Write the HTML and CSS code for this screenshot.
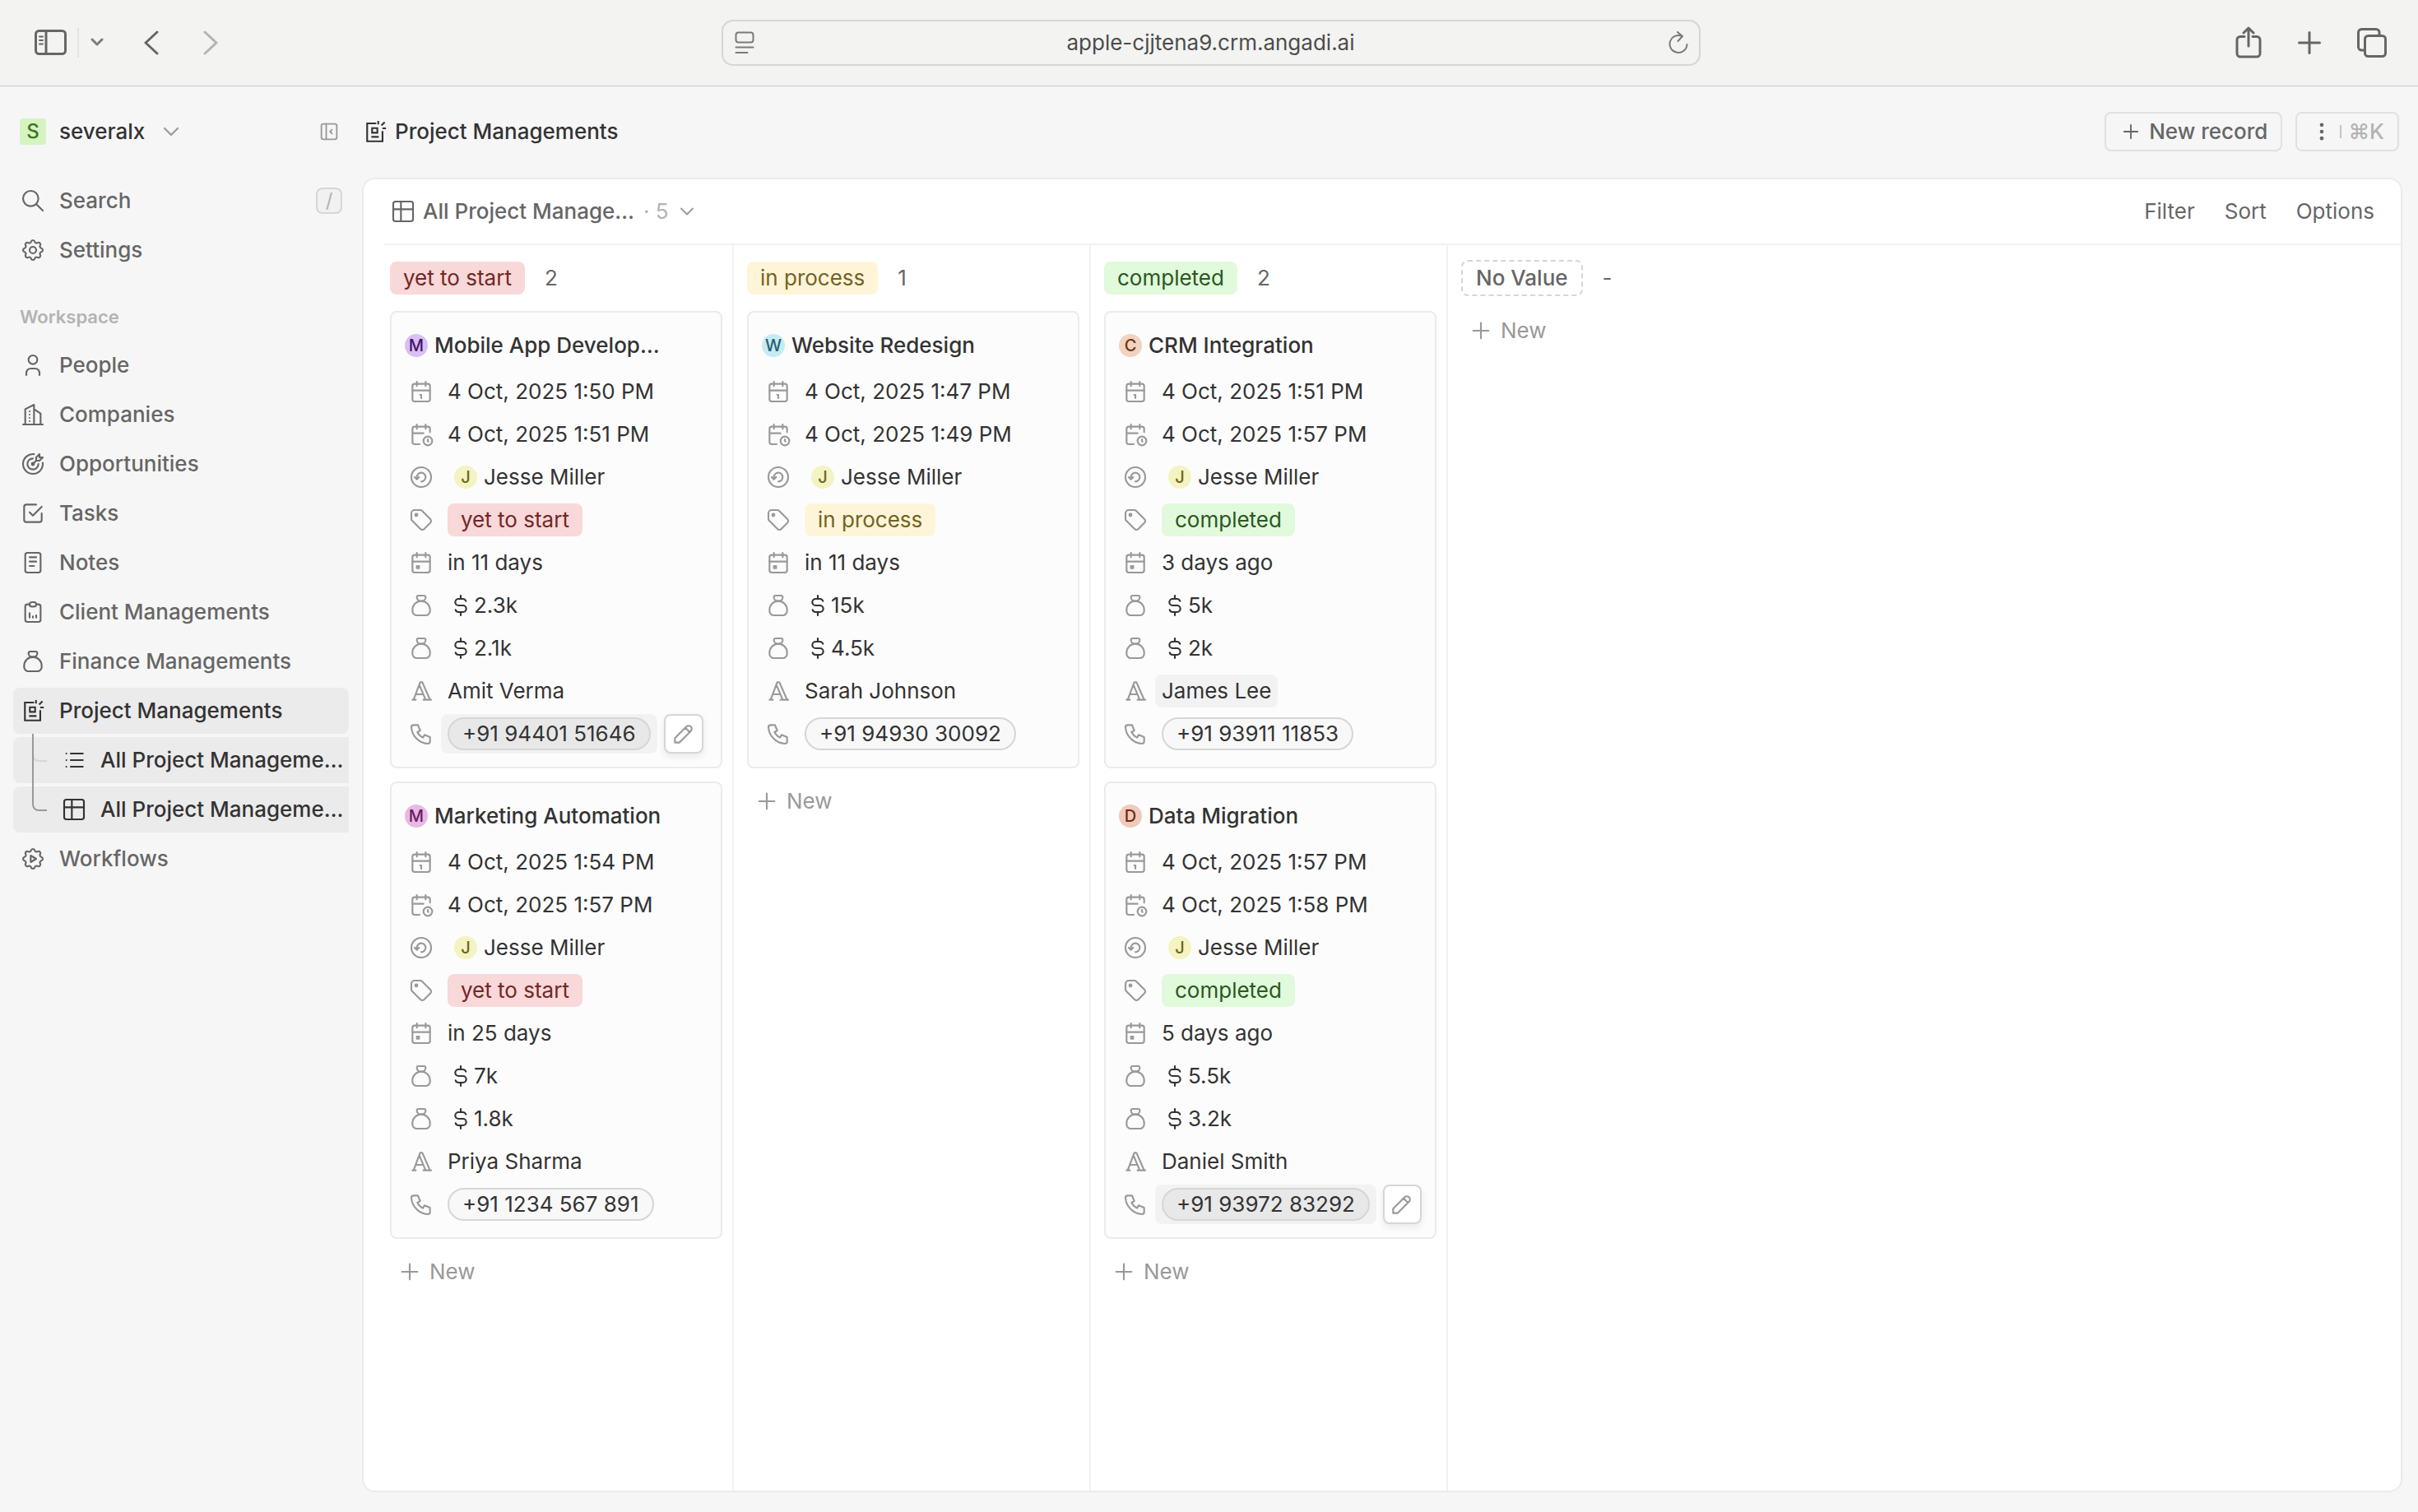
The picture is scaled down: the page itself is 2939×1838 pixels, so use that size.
FILE: index.html
```html
<!DOCTYPE html>
<html lang="en">
<head>
<meta charset="utf-8">
<meta name="viewport" content="width=device-width, initial-scale=1">
<title>Project Managements</title>
<link rel="stylesheet" href="styles.css">
</head>
<body>
<svg class="sprite" aria-hidden="true">
  <symbol id="i-search" viewBox="0 0 24 24"><circle cx="10" cy="10" r="7"/><path d="M21 21l-6-6"/></symbol>
  <symbol id="i-settings" viewBox="0 0 24 24"><path d="M10.325 4.317c.426-1.756 2.924-1.756 3.35 0a1.724 1.724 0 0 0 2.573 1.066c1.543-.94 3.31.826 2.37 2.37a1.724 1.724 0 0 0 1.065 2.572c1.756.426 1.756 2.924 0 3.35a1.724 1.724 0 0 0-1.066 2.573c.94 1.543-.826 3.31-2.37 2.37a1.724 1.724 0 0 0-2.572 1.065c-.426 1.756-2.924 1.756-3.35 0a1.724 1.724 0 0 0-2.573-1.066c-1.543.94-3.31-.826-2.37-2.37a1.724 1.724 0 0 0-1.065-2.572c-1.756-.426-1.756-2.924 0-3.35a1.724 1.724 0 0 0 1.066-2.573c-.94-1.543.826-3.31 2.37-2.37 1 .608 2.296.07 2.572-1.065z"/><circle cx="12" cy="12" r="3"/></symbol>
  <symbol id="i-workflow" viewBox="0 0 24 24"><path d="M10.325 4.317c.426-1.756 2.924-1.756 3.35 0a1.724 1.724 0 0 0 2.573 1.066c1.543-.94 3.31.826 2.37 2.37a1.724 1.724 0 0 0 1.065 2.572c1.756.426 1.756 2.924 0 3.35a1.724 1.724 0 0 0-1.066 2.573c.94 1.543-.826 3.31-2.37 2.37a1.724 1.724 0 0 0-2.572 1.065c-.426 1.756-2.924 1.756-3.35 0a1.724 1.724 0 0 0-2.573-1.066c-1.543.94-3.31-.826-2.37-2.37a1.724 1.724 0 0 0-1.065-2.572c-1.756-.426-1.756-2.924 0-3.35a1.724 1.724 0 0 0 1.066-2.573c-.94-1.543.826-3.31 2.37-2.37 1 .608 2.296.07 2.572-1.065z"/><path d="M10 9v6l5-3z"/></symbol>
  <symbol id="i-user" viewBox="0 0 24 24"><circle cx="12" cy="7" r="4"/><path d="M6 21v-2a4 4 0 0 1 4-4h4a4 4 0 0 1 4 4v2"/></symbol>
  <symbol id="i-building" viewBox="0 0 24 24"><path d="M3 21h18M5 21V7l8-4v18M19 21V11l-6-4M9 9v.01M9 12v.01M9 15v.01M9 18v.01"/></symbol>
  <symbol id="i-target" viewBox="0 0 24 24"><circle cx="12" cy="12" r="1"/><path d="M12 7a5 5 0 1 0 5 5M13 3.055A9 9 0 1 0 20.941 11M15 6v3h3l3-3h-3V3zM15 9l-3 3"/></symbol>
  <symbol id="i-checkbox" viewBox="0 0 24 24"><path d="M9 11l3 3 8-8M20 12v6a2 2 0 0 1-2 2H6a2 2 0 0 1-2-2V6a2 2 0 0 1 2-2h9"/></symbol>
  <symbol id="i-notes" viewBox="0 0 24 24"><rect x="5" y="3" width="14" height="18" rx="2"/><path d="M9 7h6M9 11h6M9 15h4"/></symbol>
  <symbol id="i-clipboard" viewBox="0 0 24 24"><path d="M9 5H7a2 2 0 0 0-2 2v12a2 2 0 0 0 2 2h10a2 2 0 0 0 2-2V7a2 2 0 0 0-2-2h-2"/><rect x="9" y="3" width="6" height="4" rx="2"/><path d="M9 17v-4M12 17v-1M15 17v-2"/></symbol>
  <symbol id="i-money" viewBox="0 0 24 24"><path d="M9.5 3h5A1.500 1.500 0 0 1 16 4.500 3.500 3.500 0 0 1 12.500 8h-1A3.500 3.500 0 0 1 8 4.500 1.500 1.500 0 0 1 9.500 3z"/><path d="M4 17v-1a8 8 0 1 1 16 0v1a4 4 0 0 1-4 4H8a4 4 0 0 1-4-4z"/></symbol>
  <symbol id="i-project" viewBox="0 0 24 24"><path d="M13 4.500H4.700V20.800H18.700V11.500" stroke-linecap="butt" stroke-linejoin="miter"/><path d="M9.200 8.800h4.800v4.200H9.200zM8.500 16.800h6.800M14.800 2.200v3.300M17.700 6.400l3-3M18.600 9h3.300" stroke-linecap="butt" stroke-linejoin="miter"/></symbol>
  <symbol id="i-list" viewBox="0 0 24 24"><path d="M9 6h11M9 12h11M9 18h11M5 6v.01M5 12v.01M5 18v.01"/></symbol>
  <symbol id="i-table" viewBox="0 0 24 24"><rect x="3" y="3" width="18" height="18" rx="2"/><path d="M3 10h18M10 3v18"/></symbol>
  <symbol id="i-cal-one" viewBox="0 0 24 24"><rect x="4" y="5" width="16" height="16" rx="2"/><path d="M16 3v4M8 3v4M4 11h16M11 15h1v3"/></symbol>
  <symbol id="i-cal-clock" viewBox="0 0 24 24"><path d="M10.500 21H6a2 2 0 0 1-2-2V7a2 2 0 0 1 2-2h12a2 2 0 0 1 2 2v3M16 3v4M8 3v4M4 11h10M18 16.500V18l.5.5"/><circle cx="18" cy="18" r="4"/></symbol>
  <symbol id="i-cal-event" viewBox="0 0 24 24"><rect x="4" y="5" width="16" height="16" rx="2"/><path d="M16 3v4M8 3v4M4 11h16M8 15h2v2H8z"/></symbol>
  <symbol id="i-creator" viewBox="0 0 24 24"><circle cx="12" cy="12" r="9"/><path d="M12 16a4 4 0 1 0-4-4v1M6 12l2 2 2-2"/></symbol>
  <symbol id="i-tag" viewBox="0 0 24 24"><circle cx="7.500" cy="7.500" r="1"/><path d="M3 6v5.172a2 2 0 0 0 .586 1.414l7.710 7.710a2.410 2.410 0 0 0 3.408 0l5.592-5.592a2.410 2.410 0 0 0 0-3.408l-7.710-7.710A2 2 0 0 0 11.172 3H6a3 3 0 0 0-3 3z"/></symbol>
  <symbol id="i-text" viewBox="0 0 24 24"><path d="M4 20h3M14 20h7M6.900 15h6.900M10.200 6.300L16 20M5 20l6-16h2l7 16"/></symbol>
  <symbol id="i-phone" viewBox="0 0 24 24"><path d="M5 4h4l2 5-2.500 1.500a11 11 0 0 0 5 5L15 13l5 2v4a2 2 0 0 1-2 2A16 16 0 0 1 3 6a2 2 0 0 1 2-2"/></symbol>
  <symbol id="i-pencil" viewBox="0 0 24 24"><path d="M4 20h4L18.500 9.500a2.828 2.828 0 1 0-4-4L4 16v4M13.500 6.500l4 4"/></symbol>
  <symbol id="i-dollar" viewBox="0 0 24 24"><path d="M16.700 8A3 3 0 0 0 14 6h-4a3 3 0 0 0 0 6h4a3 3 0 0 1 0 6h-4a3 3 0 0 1-2.700-2M12 3v3M12 18v3"/></symbol>
  <symbol id="i-plus" viewBox="0 0 24 24"><path d="M12 5v14M5 12h14"/></symbol>
  <symbol id="i-down" viewBox="0 0 24 24"><path d="M6 9l6 6 6-6"/></symbol>
  <symbol id="i-collapse" viewBox="0 0 24 24"><rect x="4" y="4" width="16" height="16" rx="2"/><path d="M9 4v16M15 10l-2 2 2 2"/></symbol>
  <symbol id="i-dots" viewBox="0 0 24 24"><g fill="currentColor" stroke="none"><circle cx="12" cy="5" r="2"/><circle cx="12" cy="12" r="2"/><circle cx="12" cy="19" r="2"/></g></symbol>
</svg>

<header class="browser">
  <div class="browser-left">
    <button class="chrome-btn" aria-label="Show sidebar"><svg class="b-side" viewBox="0 0 40 32"><rect x="1.500" y="1.500" width="36" height="28" rx="4"/><path d="M14 2v27"/><path d="M6 8.500h4M6 13h4M6 17.500h4" stroke-width="2"/></svg></button>
    <span class="chrome-rule"></span>
    <button class="chrome-btn chrome-menu" aria-label="Tab groups"><svg class="b-menu" viewBox="0 0 16 12"><path d="M2 2l6 6 6-6"/></svg></button>
    <button class="chrome-btn" aria-label="Back"><svg class="b-arrow" viewBox="0 0 20 30"><path d="M17 2L3 15l14 13"/></svg></button>
    <button class="chrome-btn chrome-forward" aria-label="Forward"><svg class="b-arrow" viewBox="0 0 20 30"><path d="M3 2l14 13L3 28"/></svg></button>
  </div>
  <div class="address">
    <svg class="b-reader" viewBox="0 0 24 28"><rect x="1.500" y="1.500" width="21" height="12" rx="3"/><path d="M1.500 19.500h21M1.500 26h14"/></svg>
    <input class="address-input" type="text" aria-label="Address" value="apple-cjjtena9.crm.angadi.ai">
    <button class="chrome-btn" aria-label="Reload"><svg class="b-reload" viewBox="0 0 26 30"><path d="M17.500 7A10.500 10.500 0 1 0 23.500 17M12 2l6 5-5.500 6"/></svg></button>
  </div>
  <div class="browser-right">
    <button class="chrome-btn" aria-label="Share"><svg class="b-share" viewBox="0 0 32 40"><path d="M11 12.500H6a4 4 0 0 0-4 4V33a4 4 0 0 0 4 4h20a4 4 0 0 0 4-4V16.500a4 4 0 0 0-4-4h-5M16 24V2M10 8l6-6 6 6"/></svg></button>
    <button class="chrome-btn" aria-label="New tab"><svg class="b-plus" viewBox="0 0 28 28"><path d="M14 1.500v25M1.500 14h25"/></svg></button>
    <button class="chrome-btn" aria-label="Tab overview"><svg class="b-tabs" viewBox="0 0 36 36"><rect x="9.500" y="9.500" width="25" height="25" rx="4"/><path d="M8 27H5.500a4 4 0 0 1-4-4V5.500a4 4 0 0 1 4-4H23a4 4 0 0 1 4 4V8"/></svg></button>
  </div>
</header>

<div class="app">
  <aside class="sidebar">
    <div class="workspace">
      <button class="workspace-switch"><span class="workspace-logo">S</span><span>severalx</span><svg class="icon muted"><use href="#i-down"/></svg></button>
      <button class="collapse" aria-label="Collapse sidebar"><svg class="icon icon-md"><use href="#i-collapse"/></svg></button>
    </div>
    <nav class="nav" aria-label="Main">
      <a class="nav-item" href="#"><svg class="icon"><use href="#i-search"/></svg><span class="nav-label">Search</span><kbd class="key">/</kbd></a>
      <a class="nav-item" href="#"><svg class="icon"><use href="#i-settings"/></svg><span class="nav-label">Settings</span></a>
    </nav>
    <h2 class="nav-title">Workspace</h2>
    <nav class="nav" aria-label="Workspace">
      <a class="nav-item" href="#"><svg class="icon"><use href="#i-user"/></svg><span class="nav-label">People</span></a>
      <a class="nav-item" href="#"><svg class="icon"><use href="#i-building"/></svg><span class="nav-label">Companies</span></a>
      <a class="nav-item" href="#"><svg class="icon"><use href="#i-target"/></svg><span class="nav-label">Opportunities</span></a>
      <a class="nav-item" href="#"><svg class="icon"><use href="#i-checkbox"/></svg><span class="nav-label">Tasks</span></a>
      <a class="nav-item" href="#"><svg class="icon"><use href="#i-notes"/></svg><span class="nav-label">Notes</span></a>
      <a class="nav-item" href="#"><svg class="icon"><use href="#i-clipboard"/></svg><span class="nav-label">Client Managements</span></a>
      <a class="nav-item" href="#"><svg class="icon"><use href="#i-money"/></svg><span class="nav-label">Finance Managements</span></a>
      <a class="nav-item active" href="#"><svg class="icon"><use href="#i-project"/></svg><span class="nav-label">Project Managements</span></a>
      <a class="nav-item active sub" href="#"><svg class="icon"><use href="#i-list"/></svg><span class="nav-label">All Project Manageme…</span></a>
      <a class="nav-item active sub last" href="#"><svg class="icon"><use href="#i-table"/></svg><span class="nav-label">All Project Manageme…</span></a>
      <a class="nav-item" href="#"><svg class="icon"><use href="#i-workflow"/></svg><span class="nav-label">Workflows</span></a>
    </nav>
  </aside>

  <main class="main">
    <div class="page-head">
      <h1 class="page-title"><svg class="icon"><use href="#i-project"/></svg>Project Managements</h1>
      <div class="page-actions">
        <button class="btn"><svg class="icon icon-md"><use href="#i-plus"/></svg>New record</button>
        <button class="btn btn-cmd" aria-label="Command menu"><svg class="icon icon-md"><use href="#i-dots"/></svg><span class="btn-rule"></span><span class="shortcut">⌘K</span></button>
      </div>
    </div>

    <section class="panel">
      <div class="toolbar">
        <button class="view-picker"><svg class="icon"><use href="#i-table"/></svg><span class="view-name">All Project Manage…</span><span class="view-count">· 5</span><svg class="icon icon-md muted"><use href="#i-down"/></svg></button>
        <div class="toolbar-actions">
          <button class="tool">Filter</button>
          <button class="tool">Sort</button>
          <button class="tool">Options</button>
        </div>
      </div>

      <div class="board">
        <section class="column">
          <header class="column-head"><span class="tag red">yet to start</span><span class="count">2</span></header>
          <article class="card">
            <h3 class="card-title"><span class="avatar violet">M</span><span class="card-name">Mobile App Develop…</span></h3>
            <ul class="fields">
              <li class="field"><svg class="icon"><use href="#i-cal-one"/></svg><span class="value">4 Oct, 2025 1:50 PM</span></li>
              <li class="field"><svg class="icon"><use href="#i-cal-clock"/></svg><span class="value">4 Oct, 2025 1:51 PM</span></li>
              <li class="field"><svg class="icon"><use href="#i-creator"/></svg><span class="value person"><span class="avatar yellow">J</span>Jesse Miller</span></li>
              <li class="field"><svg class="icon"><use href="#i-tag"/></svg><span class="value"><span class="tag red">yet to start</span></span></li>
              <li class="field"><svg class="icon"><use href="#i-cal-event"/></svg><span class="value">in 11 days</span></li>
              <li class="field"><svg class="icon"><use href="#i-money"/></svg><span class="value"><svg class="icon"><use href="#i-dollar"/></svg>2.3k</span></li>
              <li class="field"><svg class="icon"><use href="#i-money"/></svg><span class="value"><svg class="icon"><use href="#i-dollar"/></svg>2.1k</span></li>
              <li class="field"><svg class="icon"><use href="#i-text"/></svg><span class="value">Amit Verma</span></li>
              <li class="field"><svg class="icon"><use href="#i-phone"/></svg><span class="value hovered"><a class="pill" href="#">+91 94401 51646</a></span><button class="edit" aria-label="Edit phone"><svg class="icon"><use href="#i-pencil"/></svg></button></li>
            </ul>
          </article>
          <article class="card">
            <h3 class="card-title"><span class="avatar pink">M</span><span class="card-name">Marketing Automation</span></h3>
            <ul class="fields">
              <li class="field"><svg class="icon"><use href="#i-cal-one"/></svg><span class="value">4 Oct, 2025 1:54 PM</span></li>
              <li class="field"><svg class="icon"><use href="#i-cal-clock"/></svg><span class="value">4 Oct, 2025 1:57 PM</span></li>
              <li class="field"><svg class="icon"><use href="#i-creator"/></svg><span class="value person"><span class="avatar yellow">J</span>Jesse Miller</span></li>
              <li class="field"><svg class="icon"><use href="#i-tag"/></svg><span class="value"><span class="tag red">yet to start</span></span></li>
              <li class="field"><svg class="icon"><use href="#i-cal-event"/></svg><span class="value">in 25 days</span></li>
              <li class="field"><svg class="icon"><use href="#i-money"/></svg><span class="value"><svg class="icon"><use href="#i-dollar"/></svg>7k</span></li>
              <li class="field"><svg class="icon"><use href="#i-money"/></svg><span class="value"><svg class="icon"><use href="#i-dollar"/></svg>1.8k</span></li>
              <li class="field"><svg class="icon"><use href="#i-text"/></svg><span class="value">Priya Sharma</span></li>
              <li class="field"><svg class="icon"><use href="#i-phone"/></svg><span class="value"><a class="pill" href="#">+91 1234 567 891</a></span></li>
            </ul>
          </article>
          <button class="add"><svg class="icon"><use href="#i-plus"/></svg>New</button>
        </section>

        <section class="column">
          <header class="column-head"><span class="tag amber">in process</span><span class="count">1</span></header>
          <article class="card">
            <h3 class="card-title"><span class="avatar cyan">W</span><span class="card-name">Website Redesign</span></h3>
            <ul class="fields">
              <li class="field"><svg class="icon"><use href="#i-cal-one"/></svg><span class="value">4 Oct, 2025 1:47 PM</span></li>
              <li class="field"><svg class="icon"><use href="#i-cal-clock"/></svg><span class="value">4 Oct, 2025 1:49 PM</span></li>
              <li class="field"><svg class="icon"><use href="#i-creator"/></svg><span class="value person"><span class="avatar yellow">J</span>Jesse Miller</span></li>
              <li class="field"><svg class="icon"><use href="#i-tag"/></svg><span class="value"><span class="tag amber">in process</span></span></li>
              <li class="field"><svg class="icon"><use href="#i-cal-event"/></svg><span class="value">in 11 days</span></li>
              <li class="field"><svg class="icon"><use href="#i-money"/></svg><span class="value"><svg class="icon"><use href="#i-dollar"/></svg>15k</span></li>
              <li class="field"><svg class="icon"><use href="#i-money"/></svg><span class="value"><svg class="icon"><use href="#i-dollar"/></svg>4.5k</span></li>
              <li class="field"><svg class="icon"><use href="#i-text"/></svg><span class="value">Sarah Johnson</span></li>
              <li class="field"><svg class="icon"><use href="#i-phone"/></svg><span class="value"><a class="pill" href="#">+91 94930 30092</a></span></li>
            </ul>
          </article>
          <button class="add"><svg class="icon"><use href="#i-plus"/></svg>New</button>
        </section>

        <section class="column">
          <header class="column-head"><span class="tag green">completed</span><span class="count">2</span></header>
          <article class="card">
            <h3 class="card-title"><span class="avatar orange">C</span><span class="card-name">CRM Integration</span></h3>
            <ul class="fields">
              <li class="field"><svg class="icon"><use href="#i-cal-one"/></svg><span class="value">4 Oct, 2025 1:51 PM</span></li>
              <li class="field"><svg class="icon"><use href="#i-cal-clock"/></svg><span class="value">4 Oct, 2025 1:57 PM</span></li>
              <li class="field"><svg class="icon"><use href="#i-creator"/></svg><span class="value person"><span class="avatar yellow">J</span>Jesse Miller</span></li>
              <li class="field"><svg class="icon"><use href="#i-tag"/></svg><span class="value"><span class="tag green">completed</span></span></li>
              <li class="field"><svg class="icon"><use href="#i-cal-event"/></svg><span class="value">3 days ago</span></li>
              <li class="field"><svg class="icon"><use href="#i-money"/></svg><span class="value"><svg class="icon"><use href="#i-dollar"/></svg>5k</span></li>
              <li class="field"><svg class="icon"><use href="#i-money"/></svg><span class="value"><svg class="icon"><use href="#i-dollar"/></svg>2k</span></li>
              <li class="field"><svg class="icon"><use href="#i-text"/></svg><span class="value hovered short">James Lee</span></li>
              <li class="field"><svg class="icon"><use href="#i-phone"/></svg><span class="value"><a class="pill" href="#">+91 93911 11853</a></span></li>
            </ul>
          </article>
          <article class="card">
            <h3 class="card-title"><span class="avatar rust">D</span><span class="card-name">Data Migration</span></h3>
            <ul class="fields">
              <li class="field"><svg class="icon"><use href="#i-cal-one"/></svg><span class="value">4 Oct, 2025 1:57 PM</span></li>
              <li class="field"><svg class="icon"><use href="#i-cal-clock"/></svg><span class="value">4 Oct, 2025 1:58 PM</span></li>
              <li class="field"><svg class="icon"><use href="#i-creator"/></svg><span class="value person"><span class="avatar yellow">J</span>Jesse Miller</span></li>
              <li class="field"><svg class="icon"><use href="#i-tag"/></svg><span class="value"><span class="tag green">completed</span></span></li>
              <li class="field"><svg class="icon"><use href="#i-cal-event"/></svg><span class="value">5 days ago</span></li>
              <li class="field"><svg class="icon"><use href="#i-money"/></svg><span class="value"><svg class="icon"><use href="#i-dollar"/></svg>5.5k</span></li>
              <li class="field"><svg class="icon"><use href="#i-money"/></svg><span class="value"><svg class="icon"><use href="#i-dollar"/></svg>3.2k</span></li>
              <li class="field"><svg class="icon"><use href="#i-text"/></svg><span class="value">Daniel Smith</span></li>
              <li class="field"><svg class="icon"><use href="#i-phone"/></svg><span class="value hovered"><a class="pill" href="#">+91 93972 83292</a></span><button class="edit" aria-label="Edit phone"><svg class="icon"><use href="#i-pencil"/></svg></button></li>
            </ul>
          </article>
          <button class="add"><svg class="icon"><use href="#i-plus"/></svg>New</button>
        </section>

        <section class="column">
          <header class="column-head"><span class="tag none">No Value</span><span class="count">-</span></header>
          <button class="add"><svg class="icon"><use href="#i-plus"/></svg>New</button>
        </section>
      </div>
    </section>
  </main>
</div>
</body>
</html>
```

FILE: styles.css
```css
*,
*::before,
*::after {
  box-sizing: border-box;
}

html,
body {
  height: 100%;
}

body {
  margin: 0;
  display: flex;
  flex-direction: column;
  background: #f6f6f6;
  color: #333;
  font: 400 26px/40px Inter, "Liberation Sans", sans-serif;
}

h1, h2, h3, ul {
  margin: 0;
  padding: 0;
  font: inherit;
  list-style: none;
}

a {
  color: inherit;
  text-decoration: none;
}

button {
  display: flex;
  align-items: center;
  margin: 0;
  padding: 0;
  border: 0;
  background: none;
  color: inherit;
  font: inherit;
}

svg {
  display: block;
  flex: none;
  fill: none;
  stroke: currentColor;
  stroke-linecap: round;
  stroke-linejoin: round;
}

.sprite {
  display: none;
}

.icon {
  width: 32px;
  height: 32px;
  stroke-width: 1.6;
}

.icon-md {
  width: 28px;
  height: 28px;
}

.muted {
  color: #999;
}

/* Browser toolbar */

.browser {
  flex: none;
  display: grid;
  grid-template-columns: 1fr minmax(400px, 1190px) 1fr;
  align-items: center;
  height: 105px;
  padding: 0 38px 0 42px;
  border-bottom: 1px solid #c9c9c8;
  background: #f3f3f1;
  color: #666664;
}

.browser svg {
  stroke-width: 3;
}

.browser-left,
.browser-right {
  display: flex;
  align-items: center;
}

.browser-right {
  justify-content: flex-end;
  gap: 44px;
}

.b-side {
  width: 40px;
  height: 32px;
}

.chrome-rule {
  width: 2px;
  height: 36px;
  margin: 0 14px 0 12px;
  background: #e3e3e1;
}

.b-menu {
  width: 16px;
  height: 12px;
}

.chrome-menu {
  margin-right: 48px;
  color: #7c7c80;
}

.b-arrow {
  width: 20px;
  height: 30px;
}

.chrome-forward {
  margin-left: 52px;
  color: #b4b4b2;
}

.address {
  display: flex;
  align-items: center;
  height: 56px;
  padding: 0 12px 0 14px;
  border: 2px solid #d6d6d3;
  border-radius: 14px;
  color: #7a7a78;
}

.address svg {
  stroke-width: 2;
}

.b-reader {
  width: 24px;
  height: 28px;
}

.address-input {
  flex: 1;
  min-width: 0;
  border: 0;
  background: none;
  color: #4c4c4c;
  font: inherit;
  text-align: center;
}

.b-reload {
  width: 26px;
  height: 30px;
}

.b-share {
  width: 32px;
  height: 40px;
}

.b-plus {
  width: 28px;
  height: 28px;
}

.b-tabs {
  width: 36px;
  height: 36px;
}

/* App shell */

.app {
  flex: 1;
  display: grid;
  grid-template-columns: 440px minmax(0, 1fr);
  min-height: 0;
}

.sidebar {
  padding: 31px 16px 24px;
}

.workspace {
  display: flex;
  align-items: center;
  justify-content: space-between;
  height: 48px;
  margin-bottom: 32px;
  padding: 0 10px 0 8px;
}

.workspace-switch {
  gap: 16px;
  font-weight: 500;
}

.workspace-logo {
  width: 32px;
  height: 32px;
  border-radius: 4px;
  background: #d5f4c2;
  color: #3f7320;
  font-size: 24px;
  line-height: 32px;
  text-align: center;
}

.collapse {
  color: #999;
}

.nav {
  display: flex;
  flex-direction: column;
  gap: 4px;
}

.nav-item {
  position: relative;
  display: flex;
  align-items: center;
  gap: 16px;
  height: 56px;
  padding: 0 8px;
  border-radius: 8px;
  color: #666;
  font-weight: 500;
}

.nav-item.active {
  background: #ebebeb;
  color: #333;
}

.nav-label {
  flex: 1;
  overflow: hidden;
  text-overflow: ellipsis;
  white-space: nowrap;
}

.key {
  width: 32px;
  height: 32px;
  border: 2px solid #d6d6d6;
  border-radius: 8px;
  background: #f1f1f1;
  color: #b3b3b3;
  font: 400 24px/28px Inter, "Liberation Sans", sans-serif;
  text-align: center;
}

.nav-title {
  padding: 32px 8px 10px;
  color: #b3b3b3;
  font-size: 22px;
  font-weight: 600;
  line-height: 42px;
}

.nav-item.sub {
  padding: 0 0 0 58px;
  border-radius: 8px 0 0 8px;
}

/* Tree line that ties the views to their object */
.sub::before,
.sub::after {
  content: "";
  position: absolute;
  left: 23px;
}

.sub::before {
  top: -4px;
  width: 2px;
  height: 60px;
  background: #999;
}

.sub::after {
  top: 14px;
  width: 18px;
  height: 16px;
  border: solid #d6d6d6;
  border-width: 0 0 2px 2px;
  border-radius: 0 0 0 8px;
  clip-path: inset(0 0 0 2px);
}

.last::before {
  height: 26px;
}

.last::after {
  border-color: #999;
  clip-path: none;
}

.main {
  display: flex;
  flex-direction: column;
  min-width: 0;
  padding: 31px 19px 24px 0;
}

.page-head {
  display: flex;
  align-items: center;
  justify-content: space-between;
  height: 48px;
  margin-bottom: 32px;
  padding-right: 4px;
}

.page-title {
  display: flex;
  align-items: center;
  gap: 8px;
  font-weight: 500;
}

.page-actions {
  display: flex;
  gap: 16px;
}

.btn {
  gap: 8px;
  height: 48px;
  padding: 0 16px;
  border: 2px solid #e0e0e0;
  border-radius: 8px;
  color: #666;
  font-weight: 500;
}

.btn-rule {
  width: 2px;
  height: 16px;
  background: #c4c4c4;
}

.shortcut {
  color: #b3b3b3;
}

.panel {
  flex: 1;
  display: flex;
  flex-direction: column;
  border: 2px solid #ebebeb;
  border-radius: 16px;
  background: #fff;
}

.toolbar {
  display: flex;
  align-items: center;
  justify-content: space-between;
  height: 80px;
  margin-left: 24px;
  padding: 0 32px 0 8px;
  border-bottom: 2px solid #f1f1f1;
  color: #666;
}

.view-picker {
  gap: 8px;
}

.view-name {
  width: 260px;
  font-weight: 500;
  text-align: left;
  white-space: nowrap;
}

.view-count {
  color: #b3b3b3;
}

.toolbar-actions {
  display: flex;
  gap: 36px;
}

.board {
  flex: 1;
  display: flex;
  padding-left: 16px;
}

.column {
  flex: none;
  width: 434px;
  padding: 0 12px 0 16px;
  border-right: 2px solid #f1f1f1;
}

.column:last-child {
  border-right: 0;
}

.column-head {
  display: flex;
  align-items: center;
  gap: 24px;
  height: 80px;
}

.count {
  color: #666;
}

.tag {
  padding: 0 16px;
  border-radius: 8px;
  white-space: nowrap;
}

.red {
  background: #f8d8d8;
  color: #712727;
}

.amber {
  background: #fef5d8;
  color: #746224;
}

.green {
  background: #e1fadb;
  color: #2a5822;
}

.none {
  border: 2px dashed #d6d6d6;
  color: #666;
  font-weight: 500;
}

.card {
  margin-bottom: 16px;
  padding: 16px;
  border: 2px solid #ebebeb;
  border-radius: 8px;
  background: #fcfcfc;
}

.card-title {
  display: flex;
  align-items: center;
  gap: 8px;
  height: 48px;
  margin-bottom: 8px;
  font-weight: 500;
}

.card-name {
  overflow: hidden;
  text-overflow: ellipsis;
  white-space: nowrap;
}

.avatar {
  flex: none;
  width: 28px;
  height: 28px;
  border-radius: 50%;
  font-size: 20px;
  font-weight: 500;
  line-height: 28px;
  text-align: center;
}

.violet { background: #d9bff2; color: #42156e; }
.pink { background: #e9b8e4; color: #6a1c63; }
.cyan { background: #c5ebf4; color: #25606f; }
.orange { background: #f1d3bf; color: #6e3513; }
.rust { background: #f1cabb; color: #70290f; }
.yellow { background: #f4f3c2; color: #6c681c; }

.fields {
  display: flex;
  flex-direction: column;
  gap: 4px;
  padding-left: 4px;
}

.field {
  display: flex;
  align-items: center;
  gap: 8px;
  height: 48px;
  color: #999;
}

.value {
  display: flex;
  align-items: center;
  height: 48px;
  padding: 0 8px;
  border-radius: 8px;
  color: #333;
  white-space: nowrap;
}

.value.person {
  gap: 8px;
  padding-left: 16px;
}

.value.hovered {
  background: #f2f2f2;
}

.value.short {
  height: 40px;
}

.pill {
  height: 40px;
  padding: 0 16px;
  border: 2px solid #d6d6d6;
  border-radius: 20px;
  background: #f8f8f8;
  line-height: 36px;
}

.hovered .pill {
  background: #e8e8e8;
}

.edit {
  justify-content: center;
  width: 48px;
  height: 48px;
  border: 2px solid #d6d6d6;
  border-radius: 8px;
  background: #fff;
  box-shadow: 0 4px 8px rgba(0, 0, 0, 0.08);
}

.add {
  gap: 8px;
  height: 48px;
  padding: 0 8px;
  color: #999;
}
```
